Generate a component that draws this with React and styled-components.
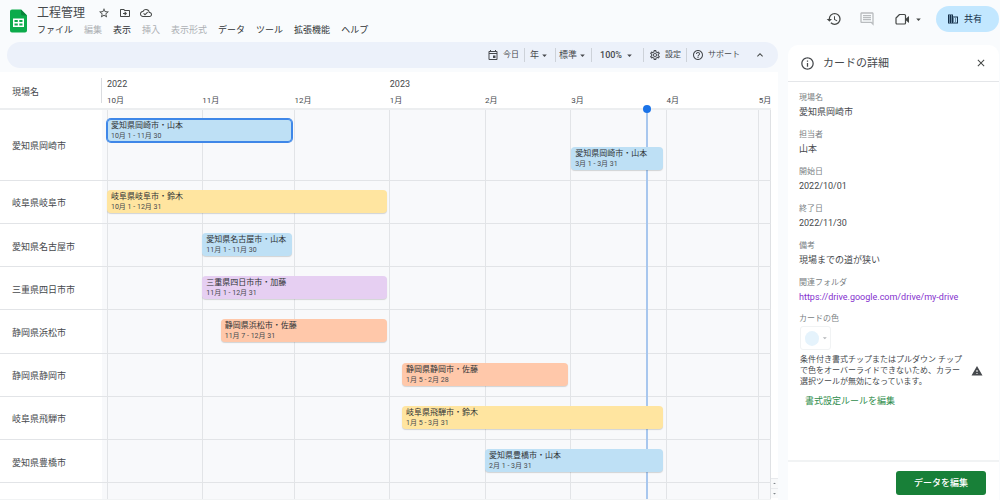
import React from "react";
import styled, { createGlobalStyle, css } from "styled-components";
import {
  MdStarBorder,
  MdOutlineDriveFileMove,
  MdOutlineCloudDone,
  MdHistory,
  MdOutlineComment,
  MdBusiness,
  MdOutlineEvent,
  MdOutlineSettings,
  MdHelpOutline,
  MdExpandLess,
  MdInfoOutline,
  MdClose,
  MdWarning,
  MdArrowDropDown,
  MdArrowDropUp,
} from "react-icons/md";

const GlobalStyle = createGlobalStyle`
  *, *::before, *::after { box-sizing: border-box; }
  body {
    margin: 0;
    background: #f9fbfd;
    color: #46494d;
    font-family: Roboto, "Noto Sans CJK JP", sans-serif;
    font-size: 9px;
    line-height: 12px;
  }
  button {
    margin: 0;
    padding: 0;
    border: 0;
    background: none;
    color: inherit;
    font: inherit;
    white-space: nowrap;
    cursor: pointer;
  }
  button:disabled { cursor: default; }
  h1, h2, dl, dd { margin: 0; font-weight: 400; }
`;

const Page = styled.div`
  display: flex;
  flex-direction: column;
  min-height: 100vh;
`;

const Header = styled.header`
  display: flex;
  align-items: center;
  height: 40px;
  padding: 0 1px 0 9px;
`;

const Logo = styled.svg`
  flex: none;
  width: 18px;
  height: 24px;
  margin: 2px 10px 0 0;
`;

const TitleBlock = styled.div`
  flex: 1;
  padding-top: 2px;
`;

const TitleRow = styled.div`
  display: flex;
  align-items: center;
  height: 18px;
`;

const DocTitle = styled.h1`
  margin-right: 13px;
  font-size: 12px;
  line-height: 18px;
`;

const IconButton = styled.button`
  display: inline-flex;
  align-items: center;
  justify-content: center;
  color: ${(p) => p.$tone || "#444746"};
  svg {
    width: ${(p) => p.$size || 12}px;
    height: ${(p) => p.$size || 12}px;
  }
`;

const TitleIcons = styled.div`
  display: flex;
  gap: 9px;
`;

const Menu = styled.nav`
  display: flex;
  gap: 11px;
  height: 16px;
`;

const MenuItem = styled.button`
  line-height: 16px;
  color: #303336;
  &:disabled { color: #adb0b4; }
`;

const HeaderActions = styled.div`
  display: flex;
  align-items: center;
  padding-bottom: 2px;
`;

const HistoryTools = styled.div`
  display: flex;
  gap: 17px;
`;

const MeetButton = styled.button`
  display: flex;
  align-items: center;
  gap: 3px;
  margin: 0 12px 0 20px;
  color: #444746;
`;

const ShareButton = styled.button`
  display: flex;
  align-items: center;
  justify-content: center;
  gap: 5px;
  width: 63px;
  height: 26px;
  padding-right: 6px;
  border-radius: 13px;
  background: #c2e7ff;
  color: #14304a;
`;

const Workspace = styled.div`
  display: flex;
  flex: 1;
  gap: 10px;
  padding: 2px 1px 0 0;
`;

const MainColumn = styled.main`
  display: flex;
  flex: 1;
  flex-direction: column;
  gap: 4px;
  min-width: 0;
`;

const Toolbar = styled.div`
  display: flex;
  align-items: center;
  justify-content: flex-end;
  height: 26px;
  margin-left: 7px;
  padding-right: 12px;
  border-radius: 13px;
  background: #ecf1fa;
`;

const ToolButton = styled.button`
  display: flex;
  align-items: center;
  gap: ${(p) => p.$gap || 0}px;
  height: 14px;
  margin-right: ${(p) => (p.$last ? 8 : 0)}px;
  padding: 0 ${(p) => p.$pad || 5}px;
  border-right: 1px solid ${(p) => (p.$last ? "transparent" : "#cdd2d9")};
  font-size: ${(p) => (p.$small ? 8 : 9)}px;
  font-weight: ${(p) => (p.$strong ? 500 : 400)};
`;

const TimelineFrame = styled.section`
  display: flex;
  flex: 1;
  background: #fff;
`;

const Timeline = styled.div`
  display: grid;
  flex: 1;
  grid-template-rows: 38px 1fr 1px;
  min-width: 0;
`;

const HeadRow = styled.div`
  display: grid;
  grid-template-columns: 102px 1fr;
  border-bottom: 2px solid #eceef0;
`;

const HeadName = styled.div`
  align-self: end;
  height: 25px;
  margin-bottom: 5px;
  padding: 4px 0 0 12px;
  border-right: 1px solid #dadce0;
  line-height: 21px;
`;

const dayGrid = css`
  display: grid;
  grid-template-columns: repeat(216, minmax(0, 1fr));
  padding-left: 5px;
`;

const Scale = styled.div`
  ${dayGrid}
  grid-template-rows: 20px 16px;
  white-space: nowrap;
`;

const YearLabel = styled.div`
  grid-row: 1;
  grid-column: ${(p) => p.$start} / span 20;
  line-height: 24px;
`;

const MonthLabel = styled.div`
  grid-row: 2;
  grid-column: ${(p) => p.$start} / -1;
  font-size: 8px;
  line-height: 17px;
`;

const Body = styled.div`
  display: grid;
  grid-template-columns: 102px 1fr;
`;

const MonthLines = styled.div`
  ${dayGrid}
  grid-area: 1 / 2;
  border-right: 1px solid #dfe1e4;
  background: #f8f9fb;
`;

const MonthColumn = styled.div`
  grid-column: span ${(p) => p.$days};
  border-left: 1px solid #e2e4e7;
`;

const TodayLayer = styled.div`
  ${dayGrid}
  grid-area: 1 / 2;
  pointer-events: none;
`;

const TodayLine = styled.div`
  position: relative;
  grid-column: 176;
  justify-self: end;
  width: 2px;
  background: #a8c7ee;
  &::before {
    content: "";
    position: absolute;
    top: -5px;
    left: -3px;
    width: 8px;
    height: 8px;
    border-radius: 50%;
    background: #1a73e8;
  }
`;

const Rows = styled.div`
  display: grid;
  grid-area: 1 / 1 / 2 / 3;
  grid-template-rows: 18fr repeat(7, 11fr) 4fr;
`;

const Row = styled.div`
  display: grid;
  grid-template-columns: 102px 1fr;
  border-bottom: ${(p) => (p.$open ? 0 : 1)}px solid #e2e4e7;
`;

const RowName = styled.div`
  display: flex;
  align-items: center;
  padding: 3px 0 0 12px;
`;

const Track = styled.div`
  ${dayGrid}
  grid-auto-rows: 23px;
  row-gap: 5px;
  padding-top: 9px;
`;

const barColors = {
  blue: "#bee0f5",
  yellow: "#ffe5a0",
  purple: "#e6cff2",
  orange: "#ffc8aa",
};

const Bar = styled.button`
  z-index: 1;
  grid-row: ${(p) => p.$lane};
  grid-column: ${(p) => p.$start} / span ${(p) => p.$days};
  min-width: 0;
  margin-right: 3px;
  padding: 0 4px;
  border-radius: 4px;
  background: ${(p) => barColors[p.$color]};
  box-shadow: 0 1px 1px #3c404333;
  text-align: left;
  ${(p) => p.$selected && css`box-shadow: inset 0 0 0 1px #3f87e8, 0 0 0 1px #3f87e8;`}
`;

const BarTitle = styled.span`
  display: block;
  font-size: 8px;
  line-height: 11px;
  color: #303336;
`;

const BarDates = styled.span`
  display: block;
  font-size: 7px;
  line-height: 10px;
`;

const ScrollRail = styled.div`
  display: flex;
  flex-direction: column;
  justify-content: flex-end;
  width: 7px;
  padding-bottom: 2px;
`;

const RailButton = styled(IconButton)`
  height: 10px;
  border-top: 1px solid #e8eaed;
  background: #f8f9fa;
`;

const BottomRail = styled.div`
  background: #f1f3f4;
`;

const Panel = styled.aside`
  display: flex;
  flex-direction: column;
  width: 211px;
  margin-top: 3px;
  border-radius: 10px 10px 0 0;
  background: #fff;
`;

const PanelHeader = styled.div`
  display: flex;
  align-items: center;
  gap: 8px;
  height: 37px;
  padding: 0 12px;
  border-bottom: 1px solid #e4e6e9;
`;

const PanelTitle = styled.h2`
  flex: 1;
  padding-top: 2px;
  font-size: 11px;
  line-height: 16px;
`;

const PanelBody = styled.div`
  flex: 1;
  padding: 10px 11px 0;
`;

const Field = styled.div`
  height: 37px;
  dt {
    font-size: 8px;
    color: #7a7f84;
  }
  dd { line-height: 16px; }
`;

const FolderLink = styled.a`
  color: #8430ce;
  text-decoration: none;
`;

const ColorLabel = styled.div`
  font-size: 8px;
  line-height: 10px;
  color: #7a7f84;
`;

const ColorButton = styled.button`
  display: flex;
  align-items: center;
  gap: 1px;
  width: 31px;
  height: 24px;
  margin: 2px 0 0 1px;
  padding-left: 4px;
  border: 1px solid #f1f3f4;
  border-radius: 3px;
  color: #b4b7ba;
`;

const Swatch = styled.span`
  width: 15px;
  height: 15px;
  border-radius: 50%;
  background: #e5f3fc;
`;

const Notice = styled.div`
  display: flex;
  align-items: center;
  justify-content: space-between;
  margin-top: 4px;
  padding: 0 5px 0 1px;
  font-size: 8px;
  line-height: 11px;
  p { margin: 0; white-space: nowrap; }
`;

const RuleButton = styled.button`
  margin: 7px 0 0 6px;
  line-height: 14px;
  color: #2f8d4c;
`;

const PanelFooter = styled.div`
  display: flex;
  justify-content: flex-end;
  height: 40px;
  padding: 9px 13px 0;
  border-top: 2px solid #f1f3f4;
`;

const EditButton = styled.button`
  width: 90px;
  height: 24px;
  border-radius: 3px;
  background: #188038;
  color: #fff;
  font-weight: 500;
`;

const menuItems = [
  ["ファイル"],
  ["編集", true],
  ["表示"],
  ["挿入", true],
  ["表示形式", true],
  ["データ"],
  ["ツール"],
  ["拡張機能"],
  ["ヘルプ"],
];

const months = [
  { label: "10月", start: 1, days: 31 },
  { label: "11月", start: 32, days: 30 },
  { label: "12月", start: 62, days: 31 },
  { label: "1月", start: 93, days: 31 },
  { label: "2月", start: 124, days: 28 },
  { label: "3月", start: 152, days: 31 },
  { label: "4月", start: 183, days: 30 },
  { label: "5月", start: 213, days: 4 },
];

const rows = [
  {
    name: "愛知県岡崎市",
    bars: [
      { who: "山本", dates: "10月 1 - 11月 30", start: 1, days: 61, color: "blue", selected: true },
      { who: "山本", dates: "3月 1 - 3月 31", start: 152, days: 31, color: "blue", lane: 2 },
    ],
  },
  { name: "岐阜県岐阜市", bars: [{ who: "鈴木", dates: "10月 1 - 12月 31", start: 1, days: 92, color: "yellow" }] },
  { name: "愛知県名古屋市", bars: [{ who: "山本", dates: "11月 1 - 11月 30", start: 32, days: 30, color: "blue" }] },
  { name: "三重県四日市市", bars: [{ who: "加藤", dates: "11月 1 - 12月 31", start: 32, days: 61, color: "purple" }] },
  {
    name: "静岡県浜松市",
    bars: [{ who: "佐藤", dates: "11月 7 - 12月 31", start: 38, days: 55, color: "orange" }],
  },
  { name: "静岡県静岡市", bars: [{ who: "佐藤", dates: "1月 5 - 2月 28", start: 97, days: 55, color: "orange" }] },
  { name: "岐阜県飛騨市", bars: [{ who: "鈴木", dates: "1月 5 - 3月 31", start: 97, days: 86, color: "yellow" }] },
  { name: "愛知県豊橋市", bars: [{ who: "山本", dates: "2月 1 - 3月 31", start: 124, days: 59, color: "blue" }] },
];

const fields = [
  ["現場名", "愛知県岡崎市"],
  ["担当者", "山本"],
  ["開始日", "2022/10/01"],
  ["終了日", "2022/11/30"],
  ["備考", "現場までの道が狭い"],
];

const folderUrl = "https://drive.google.com/drive/my-drive";

function SheetsLogo() {
  return (
    <Logo viewBox="0 0 18 24" aria-hidden="true">
      <path d="M3 0.5h9l6 6V21.500a2 2 0 0 1-2 2H3a2 2 0 0 1-2-2v-19a2 2 0 0 1 2-2z" fill="#0cab4b" />
      <path d="M12 0.500l6 6h-4.500a1.500 1.500 0 0 1-1.500-1.500z" fill="#08843a" />
      <path d="M4 9.500h11v8.500H4z M5.500 11v2h3.300v-2z M10.300 11v2h3.200v-2z M5.500 14.500v2h3.300v-2z M10.300 14.500v2h3.200v-2z" fill="#fff" fillRule="evenodd" />
    </Logo>
  );
}

function CameraIcon() {
  return (
    <svg width="15" height="13" viewBox="0 0 15 13" fill="none" aria-hidden="true">
      <path d="M4.500 1.500h5a1 1 0 0 1 1 1v7.500a1 1 0 0 1-1 1h-7.500a1 1 0 0 1-1-1V5z" stroke="currentColor" strokeWidth="1.200" strokeLinejoin="round" />
      <path d="M11 5.500l3-2.500v7l-3-2.500z" fill="currentColor" />
    </svg>
  );
}

export default function App() {
  return (
    <Page>
      <GlobalStyle />
      <Header>
        <SheetsLogo />
        <TitleBlock>
          <TitleRow>
            <DocTitle>工程管理</DocTitle>
            <TitleIcons>
              <IconButton aria-label="スター"><MdStarBorder /></IconButton>
              <IconButton aria-label="移動"><MdOutlineDriveFileMove /></IconButton>
              <IconButton aria-label="保存状況"><MdOutlineCloudDone /></IconButton>
            </TitleIcons>
          </TitleRow>
          <Menu>
            {menuItems.map(([label, disabled]) => (
              <MenuItem key={label} disabled={disabled}>{label}</MenuItem>
            ))}
          </Menu>
        </TitleBlock>
        <HeaderActions>
          <HistoryTools>
            <IconButton $size={16} aria-label="変更履歴"><MdHistory /></IconButton>
            <IconButton $size={16} $tone="#b9bcbf" aria-label="コメント"><MdOutlineComment /></IconButton>
          </HistoryTools>
          <MeetButton aria-label="通話">
            <CameraIcon />
            <MdArrowDropDown size={11} />
          </MeetButton>
          <ShareButton>
            <MdBusiness size={12} />
            共有
          </ShareButton>
        </HeaderActions>
      </Header>

      <Workspace>
        <MainColumn>
          <Toolbar>
            <ToolButton $gap={4} $small><MdOutlineEvent size={12} />今日</ToolButton>
            <ToolButton>年<MdArrowDropDown size={11} /></ToolButton>
            <ToolButton $pad={3}>標準<MdArrowDropDown size={11} /></ToolButton>
            <ToolButton $pad={8} $gap={2} $strong>100%<MdArrowDropDown size={11} /></ToolButton>
            <ToolButton $gap={4} $small><MdOutlineSettings size={12} />設定</ToolButton>
            <ToolButton $gap={4} $small $last><MdHelpOutline size={12} />サポート</ToolButton>
            <IconButton aria-label="メニューを非表示"><MdExpandLess /></IconButton>
          </Toolbar>

          <TimelineFrame>
            <Timeline>
              <HeadRow>
                <HeadName>現場名</HeadName>
                <Scale>
                  <YearLabel $start={1}>2022</YearLabel>
                  <YearLabel $start={93}>2023</YearLabel>
                  {months.map((m) => (
                    <MonthLabel key={m.label} $start={m.start}>{m.label}</MonthLabel>
                  ))}
                </Scale>
              </HeadRow>
              <Body>
                <MonthLines>
                  {months.map((m) => (
                    <MonthColumn key={m.label} $days={m.days} />
                  ))}
                </MonthLines>
                <TodayLayer><TodayLine /></TodayLayer>
                <Rows>
                  {rows.map((row) => (
                    <Row key={row.name}>
                      <RowName>{row.name}</RowName>
                      <Track>
                        {row.bars.map((bar) => (
                          <Bar
                            key={bar.start}
                            $lane={bar.lane || 1}
                            $start={bar.start}
                            $days={bar.days}
                            $color={bar.color}
                            $selected={bar.selected}
                          >
                            <BarTitle>{row.name}・{bar.who}</BarTitle>
                            <BarDates>{bar.dates}</BarDates>
                          </Bar>
                        ))}
                      </Track>
                    </Row>
                  ))}
                  <Row $open />
                </Rows>
              </Body>
              <BottomRail />
            </Timeline>
            <ScrollRail>
              <RailButton $size={7} $tone="#80868b" aria-label="上へ"><MdArrowDropUp /></RailButton>
              <RailButton $size={7} $tone="#80868b" aria-label="下へ"><MdArrowDropDown /></RailButton>
            </ScrollRail>
          </TimelineFrame>
        </MainColumn>

        <Panel>
          <PanelHeader>
            <MdInfoOutline size={15} />
            <PanelTitle>カードの詳細</PanelTitle>
            <IconButton aria-label="閉じる"><MdClose /></IconButton>
          </PanelHeader>
          <PanelBody>
            <dl>
              {fields.map(([label, value]) => (
                <Field key={label}>
                  <dt>{label}</dt>
                  <dd>{value}</dd>
                </Field>
              ))}
              <Field>
                <dt>関連フォルダ</dt>
                <dd><FolderLink href={folderUrl}>{folderUrl}</FolderLink></dd>
              </Field>
            </dl>
            <ColorLabel>カードの色</ColorLabel>
            <ColorButton disabled aria-label="カードの色">
              <Swatch />
              <MdArrowDropDown size={10} />
            </ColorButton>
            <Notice>
              <p>
                条件付き書式チップまたはプルダウン チップ<br />
                で色をオーバーライドできないため、カラー<br />
                選択ツールが無効になっています。
              </p>
              <MdWarning size={12} />
            </Notice>
            <RuleButton>書式設定ルールを編集</RuleButton>
          </PanelBody>
          <PanelFooter>
            <EditButton>データを編集</EditButton>
          </PanelFooter>
        </Panel>
      </Workspace>
    </Page>
  );
}
